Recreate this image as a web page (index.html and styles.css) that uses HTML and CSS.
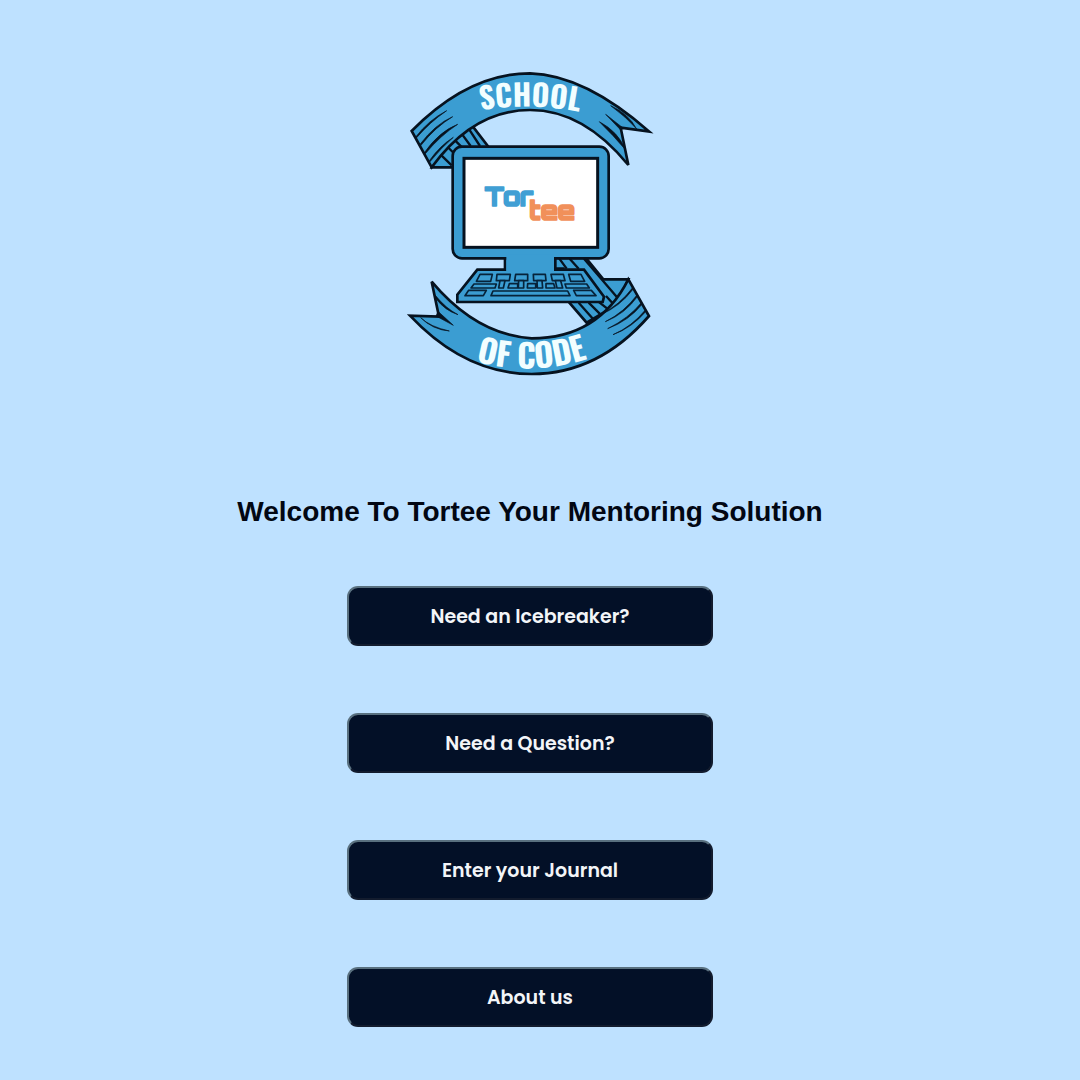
FILE: index.html
```html
<!DOCTYPE html>
<html lang="en">
<head>
<meta charset="utf-8">
<meta name="viewport" content="width=device-width, initial-scale=1">
<title>Tortee</title>
<link rel="stylesheet" href="styles.css">
</head>
<body>
<main class="home">
  <svg class="logo" viewBox="0 0 780 975" role="img" aria-label="School of Code, Tortee">
    <defs>
      <path id="top-line" d="M190 161Q390 116 590 167"/>
      <path id="bottom-line" d="M160 882Q392 974 630 872"/>
    </defs>
    <g class="ink">
      <!-- folded backs of the ribbons -->
      <path d="M95 322H175L265 260L215 195L130 240Z"/>
      <path class="crease" d="M118 280L155 316M140 258L170 288M160 236L186 262M182 217L212 258M204 203L240 258"/>
      <path d="M464 594H558L610 658H685L650 735L560 788L508 728L490 626H464Z"/>
      <path class="crease" d="M478 596L500 626M509 596L536 626M552 596L655 716M536 728L582 780M566 728L602 764M594 724L622 746M618 708L640 732"/>
      <!-- ribbons -->
      <path d="M35 213Q205 40 390 40Q555 45 748 215L662 203L685 315Q550 150 390 150Q220 150 95 322Z"/>
      <path d="M95 665L117 770L30 767Q195 942 395 942Q595 942 747 768L685 658Q595 835 395 835Q230 825 95 665Z"/>
    </g>
    <g class="fold">
      <path d="M47 231Q86 180 140 152Q90 186 49 234ZM60 253Q105 193 158 170Q106 201 63 256ZM73 278Q118 214 173 193Q122 226 76 281ZM88 302Q120 257 160 232Q126 261 90 305Z"/>
      <path d="M632 137Q685 160 710 207Q680 172 632 137ZM617 163L668 203L662 210ZM598 185Q655 215 677 270Q640 226 598 185Z"/>
      <path d="M106 706Q137 745 174 764Q134 751 108 716ZM114 754L160 796L108 768ZM62 773Q90 800 148 813Q98 809 62 773Z"/>
      <path d="M697 684Q660 734 600 765Q660 740 699 688ZM711 705Q672 757 616 785Q675 762 713 709ZM724 728Q687 774 623 806Q687 782 727 732ZM736 750Q695 800 639 824Q695 804 739 753Z"/>
    </g>
    <g class="ink">
      <!-- monitor, stand and keyboard -->
      <path d="M315 590V629H232L172 704V726H608L612 710L552 629H466V590Z"/>
      <rect x="158" y="260" width="468" height="335" rx="28"/>
      <path class="join" d="M319 584H462V632H319Z"/>
      <rect class="screen" x="192" y="295" width="401" height="267"/>
    </g>
    <g class="keys">
      <path d="M240 643H277L272 664H229ZM291 643H331L328 662H289ZM347 643H383V662H344ZM400 643H436L438 662H401ZM453 643H490L495 662H457ZM506 643H543L554 664H512Z"/>
      <path d="M222 672H289L285 684H213ZM300 662H315L310 684H296ZM328 671H353V684H324ZM356 662H371V684H355ZM383 671H407V684H382ZM411 662H426L428 684H412ZM438 671H461L465 684H438ZM466 662H482L488 684H471ZM495 672H560L568 684H499Z"/>
      <path d="M206 691H259L250 707H195ZM279 693H503L510 707H273ZM521 691H574L588 707H529Z"/>
    </g>
    <text class="banner"><textPath href="#top-line" startOffset="50%">SCHOOL</textPath></text>
    <text class="banner lower"><textPath href="#bottom-line" startOffset="50%">OF CODE</textPath></text>
    <text class="mark tor" x="254" y="437">Tor</text>
    <text class="mark tee" x="388" y="479">tee</text>
  </svg>
  <h1 class="title">Welcome To Tortee Your Mentoring Solution</h1>
  <nav class="menu">
    <button class="choice" type="button">Need an Icebreaker?</button>
    <button class="choice" type="button">Need a Question?</button>
    <button class="choice" type="button">Enter your Journal</button>
    <button class="choice" type="button">About us</button>
  </nav>
</main>
</body>
</html>
```
FILE: styles.css
```css
* { box-sizing: border-box; }
body {
  margin: 0;
  background: #bee1ff;
  color: #020713;
  font-family: "Liberation Sans", Arial, sans-serif;
}
.home {
  display: flex;
  flex-direction: column;
  align-items: center;
  padding: 60px 20px 54px 0;
}
.logo { width: 260px; height: auto; }
.title {
  margin: 110px 0 58px;
  font-size: 28px;
  line-height: 33px;
  font-weight: 700;
  text-align: center;
}
.menu {
  display: flex;
  flex-direction: column;
  gap: 67px;
  width: 366px;
  max-width: 90%;
}
.choice {
  height: 60px;
  padding: 2px 16px 0;
  border: 2px solid;
  border-color: #59707f #131c2e #131c2e #59707f;
  border-radius: 11px;
  background: #031027;
  color: #f3f5f8;
  font: 600 19px/28px Poppins, Inter, sans-serif;
  font-feature-settings: "cv11";
}
.ink { fill: #3b9dd2; stroke: #06121f; stroke-width: 8; stroke-linejoin: miter; }
.crease { stroke-width: 7; }
.fold { fill: #06121f; stroke: #06121f; stroke-width: 2; }
.keys { fill: #3b9dd2; stroke: #06233a; stroke-width: 5; stroke-linejoin: round; }
.screen { fill: #fff; stroke-width: 9; }
.join { stroke: none; }
.banner {
  fill: #f2feff;
  font: 700 90px Oswald, "Roboto Condensed", "Liberation Sans Narrow", sans-serif;
  text-anchor: middle;
}
.lower { font-size: 98px; }
.mark { font: 800 76px Orbitron, Righteous, Fredoka, Roboto, sans-serif; stroke-width: 5; stroke-linejoin: round; }
.tor { fill: #409fd4; stroke: #409fd4; }
.tee { fill: #f1905a; stroke: #f1905a; }
```
